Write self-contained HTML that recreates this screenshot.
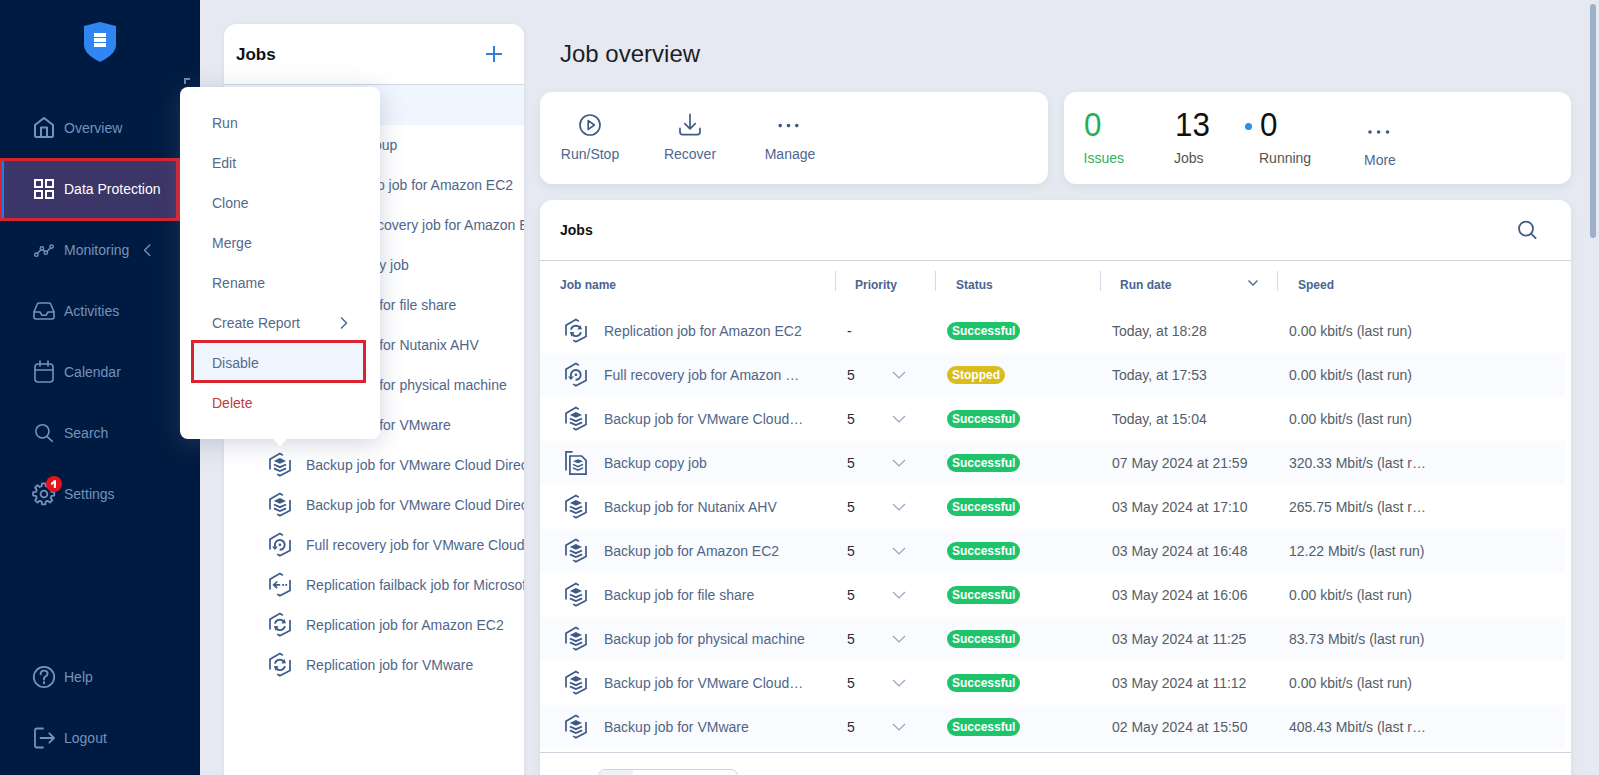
<!DOCTYPE html>
<html><head><meta charset="utf-8">
<style>
*{box-sizing:border-box;margin:0;padding:0}
html,body{width:1599px;height:775px;overflow:hidden}
body{font-family:"Liberation Sans",sans-serif;background:#e6e9f1;position:relative;color:#4d6283}
.abs{position:absolute}
#side{left:0;top:0;width:200px;height:775px;background:#001b41}
.nav{position:absolute;left:0;width:200px;height:40px;font-size:14px;color:#7592bb}
.nav .t{position:absolute;left:64px;top:0;line-height:40px;white-space:nowrap}
#jp{left:224px;top:24px;width:300px;height:760px;background:#fff;border-radius:12px 12px 0 0;box-shadow:0 1px 5px rgba(40,60,100,.07)}
.jrow{position:absolute;width:300px;height:40px;font-size:14px;color:#4f6689;white-space:nowrap;overflow:hidden}
.jrow .t{position:absolute;left:82px;top:0;line-height:40px}
.jrow svg{position:absolute}
.card{position:absolute;background:#fff;border-radius:12px;box-shadow:0 3px 8px rgba(40,60,100,.08)}
.lbl{position:absolute;text-align:center;font-size:14px;color:#4d6790;line-height:16px}
.big{position:absolute;top:17px;font-size:33px;line-height:32px;transform:scaleX(.95);transform-origin:0 0}
.sl{position:absolute;top:58px;font-size:14px;color:#555;line-height:16px}
.menu{position:absolute;left:180px;top:87px;width:200px;height:352px;background:#fff;border-radius:8px;box-shadow:0 4px 24px rgba(100,112,145,.3)}
.mi{position:absolute;left:32px;font-size:14px;color:#536a8b;line-height:20px}
.hdr{position:absolute;font-size:12px;font-weight:bold;color:#4a6491;line-height:16px}
.sep{position:absolute;width:1px;height:20px;background:#d5dbe5}
.trow{position:absolute;left:0;width:1025px;height:44px;font-size:14px;white-space:nowrap}
.trow.alt{background:#f9fbfe}
.trow .n{position:absolute;left:64px;line-height:44px;color:#4f6689}
.trow .p{position:absolute;left:307px;line-height:44px;color:#1f2a3a}
.trow .d{position:absolute;left:572px;line-height:44px;color:#555d69}
.trow .s{position:absolute;left:749px;line-height:44px;color:#555d69}
.trow svg{position:absolute}
.trow svg.chev{left:351px;top:17px}
.badge{position:absolute;left:407px;top:13px;height:18px;border-radius:9px;font-size:12px;font-weight:bold;color:#fff;line-height:18px;padding:0 5px;background:#1ec46a}
.badge.st{background:#d8bd1d}
</style></head><body>
<svg width="0" height="0" style="position:absolute">
 <defs>
  <g id="hex" fill="none" stroke="#3e5b87" stroke-width="1.7" stroke-linecap="butt" stroke-linejoin="miter">
   <path d="M6 20.4 V10.3 L15.9 4.6 L18.8 6.3 M26 11.1 V21.4 L15.9 26.8 L13.2 25.1"/>
  </g>
  <symbol id="i-rep" viewBox="0 0 32 32">
   <use href="#hex"/>
   <g fill="none" stroke="#3e5b87" stroke-width="1.9">
    <path d="M11 14.6 A5 5 0 0 1 19.6 12.4"/>
    <path d="M20.9 17.2 A5 5 0 0 1 12.4 19.5"/>
   </g>
   <path d="M17.3 14.6 L22 14.2 L20.4 9.9 Z M14.5 17.3 L9.9 17.1 L11.4 21.7 Z" fill="#3e5b87"/>
  </symbol>
  <symbol id="i-rec" viewBox="0 0 32 32">
   <use href="#hex"/>
   <path d="M15.6 20.8 A4.9 4.9 0 1 0 10.9 15.9 V17.8" fill="none" stroke="#3e5b87" stroke-width="1.9"/>
   <path d="M8 17.6 L13.9 17.6 L10.9 21 Z" fill="#3e5b87"/>
   <circle cx="15.9" cy="15.8" r="1.35" fill="#3e5b87"/>
  </symbol>
  <symbol id="i-bak" viewBox="0 0 32 32">
   <use href="#hex"/>
   <path d="M9.9 12 L15.9 9 L22 12 L15.9 14.8 Z" fill="#3e5b87"/>
   <path d="M9.9 15.5 L15.9 18.2 L22.1 15.5 M9.9 19.4 L15.9 22.1 L22.1 19.4" fill="none" stroke="#3e5b87" stroke-width="1.85"/>
  </symbol>
  <symbol id="i-copy" viewBox="0 0 32 32">
   <g fill="none" stroke="#3e5b87" stroke-width="1.7">
    <path d="M6 23.6 V4.8 H12.6"/>
    <path d="M9.9 27.1 V9 H21.7 L26 13.3 V27.1 Z"/>
    <path d="M13 17.4 L18 19.6 L23 17.4 M13 20.9 L18 23.1 L23 20.9" stroke-width="1.5"/>
   </g>
   <path d="M13 14.3 L18 12.2 L23 14.3 L18 16.3 Z" fill="#3e5b87"/>
  </symbol>
  <symbol id="i-fb" viewBox="0 0 32 32">
   <use href="#hex"/>
   <path d="M13.2 12.5 L9.7 15.9 L13.2 19.2 M9.7 15.9 H16.2" fill="none" stroke="#3e5b87" stroke-width="1.7"/>
   <rect x="18.2" y="15" width="1.8" height="1.8" fill="#3e5b87"/><rect x="21.3" y="15" width="1.8" height="1.8" fill="#3e5b87"/>
  </symbol>
 </defs>
</svg>
<div id="side" class="abs"></div>
<svg class="abs" style="left:0;top:0" width="200" height="775">
 <path d="M100 22 L116 26 V45 Q116 54 100 62 Q84 54 84 45 V26 Z" fill="#2f86f2"/>
 <rect x="94" y="33" width="12" height="4" fill="#fff"/><rect x="94" y="38" width="12" height="4" fill="#fff"/><rect x="94" y="43" width="12" height="4" fill="#fff"/>
 <path d="M185 84 V79 H190" stroke="#6d87ad" stroke-width="2" fill="none"/>
 <g fill="none" stroke="#7592bb" stroke-width="2" stroke-linejoin="round" stroke-linecap="round">
  <path d="M35 125 L44 118 L53 125 V135.5 Q53 137 51.5 137 H36.5 Q35 137 35 135.5 Z"/>
  <path d="M41 137 V127.5 H47 V137"/>
 </g>
 <rect x="0" y="158" width="180" height="63" fill="#d9232f"/>
 <rect x="2" y="161" width="174" height="57" fill="#3c3567"/>
 <rect x="2" y="161" width="2" height="57" fill="#1f7cf0"/>
 <g fill="none" stroke="#fff" stroke-width="2">
  <rect x="35" y="180" width="7" height="7"/><rect x="46" y="180" width="7" height="7"/>
  <rect x="35" y="191" width="7" height="7"/><rect x="46" y="191" width="7" height="7"/>
 </g>
 <g fill="none" stroke="#7592bb" stroke-width="1.6" stroke-linecap="round" stroke-linejoin="round">
  <g stroke-width="1.4"><circle cx="36.3" cy="254.7" r="1.7"/><circle cx="41.9" cy="248.5" r="1.7"/><circle cx="45.8" cy="252.7" r="1.7"/><circle cx="51.6" cy="246.6" r="1.7"/>
  <path d="M37.4 253.4 L40.8 249.8 M43.1 249.8 L44.6 251.4 M47 251.4 L50.4 247.9"/></g>
  <path d="M149.8 245 L144.6 250.2 L149.8 255.4" stroke-width="1.4"/>
  <path d="M34 312 L37.3 304 Q38 303 39.5 303 H48.5 Q50 303 50.7 304 L54 312 V317 Q54 319 52 319 H36 Q34 319 34 317 Z"/>
  <path d="M34 312 H40 L42 315.3 H46 L48 312 H54"/>
  <rect x="35" y="364" width="18" height="18" rx="3"/>
  <path d="M35 370 H53 M40 361 V366 M48 361 V366"/>
  <circle cx="42.4" cy="431.3" r="6.6"/>
  <path d="M47.2 436.6 L52.3 441.4"/>
  <circle cx="44" cy="677" r="10.2" stroke-width="1.8"/>
  <path d="M40.6 674.2 Q40.6 670.6 44 670.6 Q47.6 670.6 47.6 673.6 Q47.6 675.6 45.2 676.6 Q44 677.2 44 678.6 V679.6" stroke-width="1.9"/>
  <path d="M44 682.4 V683.2" stroke-width="2.2"/>
  <path d="M43 728.5 H37 Q35 728.5 35 730.5 V745.5 Q35 747.5 37 747.5 H43" stroke-width="1.8"/>
  <path d="M40.5 738 H54 M49.3 733.3 L54 738 L49.3 742.7" stroke-width="1.8"/>
 </g>
 <g fill="none" stroke="#7592bb" stroke-width="1.8" stroke-linejoin="round">
  <path d="M41.63 486.17 L42.03 483.33 L45.37 483.33 L45.77 486.17 L47.70 486.97 L49.99 485.24 L52.36 487.61 L50.63 489.90 L51.43 491.83 L54.27 492.23 L54.27 495.57 L51.43 495.97 L50.63 497.90 L52.36 500.19 L49.99 502.56 L47.70 500.83 L45.77 501.63 L45.37 504.47 L42.03 504.47 L41.63 501.63 L39.70 500.83 L37.41 502.56 L35.04 500.19 L36.77 497.90 L35.97 495.97 L33.13 495.57 L33.13 492.23 L35.97 491.83 L36.77 489.90 L35.04 487.61 L37.41 485.24 L39.70 486.97 Z"/>
  <circle cx="44" cy="494" r="3.4"/>
 </g>
 <circle cx="54" cy="484" r="8" fill="#e5141b"/>
 <path d="M53.7 480.2 H56 V488 H53.8 V483.4 Q52.7 484.4 51.1 484.9 V482.8 Q52.9 482 53.7 480.2 Z" fill="#fff"/>
 
</svg>
<div class="nav" style="top:108px"><span class="t">Overview</span></div>
<div class="nav" style="top:169px;color:#fff"><span class="t">Data Protection</span></div>
<div class="nav" style="top:230px"><span class="t">Monitoring</span></div>
<div class="nav" style="top:291px"><span class="t">Activities</span></div>
<div class="nav" style="top:352px"><span class="t">Calendar</span></div>
<div class="nav" style="top:413px"><span class="t">Search</span></div>
<div class="nav" style="top:474px"><span class="t">Settings</span></div>

<div class="nav" style="top:657px"><span class="t">Help</span></div>
<div class="nav" style="top:718px"><span class="t">Logout</span></div>
<div id="jp" class="abs">
 <div class="abs" style="left:12px;top:21px;font-size:17px;font-weight:bold;color:#111;line-height:20px">Jobs</div>
 <div class="abs" style="left:0;top:60px;width:300px;height:1px;background:#cfd6e0"></div>
 <div class="abs" style="left:0;top:61px;width:300px;height:40px;background:#f0f6fe"></div>
 <svg class="abs" style="left:254px;top:22px" width="32" height="16"><path d="M16 0 V16 M8 8 H24" stroke="#2f7fd9" stroke-width="2"/></svg>
</div>
<div class="jrow" style="left:224px;top:125px"><span class="t" style="left:87px">Backup group</span></div>
<div class="jrow" style="left:224px;top:165px"><span class="t" style="left:114px">Backup job for Amazon EC2</span></div>
<div class="jrow" style="left:224px;top:205px"><span class="t" style="left:114px">Full recovery job for Amazon EC2</span></div>
<div class="jrow" style="left:224px;top:245px"><span class="t">Backup copy job</span></div>
<div class="jrow" style="left:224px;top:285px"><span class="t">Backup job for file share</span></div>
<div class="jrow" style="left:224px;top:325px"><span class="t">Backup job for Nutanix AHV</span></div>
<div class="jrow" style="left:224px;top:365px"><span class="t">Backup job for physical machine</span></div>
<div class="jrow" style="left:224px;top:405px"><span class="t">Backup job for VMware</span></div>
<div class="jrow" style="left:224px;top:445px"><svg width="32" height="32" style="left:40px;top:4px"><use href="#i-bak"/></svg><span class="t">Backup job for VMware Cloud Director</span></div>
<div class="jrow" style="left:224px;top:485px"><svg width="32" height="32" style="left:40px;top:4px"><use href="#i-bak"/></svg><span class="t">Backup job for VMware Cloud Director 2</span></div>
<div class="jrow" style="left:224px;top:525px"><svg width="32" height="32" style="left:40px;top:4px"><use href="#i-rec"/></svg><span class="t">Full recovery job for VMware Cloud Director</span></div>
<div class="jrow" style="left:224px;top:565px"><svg width="32" height="32" style="left:40px;top:4px"><use href="#i-fb"/></svg><span class="t">Replication failback job for Microsoft Hyper-V</span></div>
<div class="jrow" style="left:224px;top:605px"><svg width="32" height="32" style="left:40px;top:4px"><use href="#i-rep"/></svg><span class="t">Replication job for Amazon EC2</span></div>
<div class="jrow" style="left:224px;top:645px"><svg width="32" height="32" style="left:40px;top:4px"><use href="#i-rep"/></svg><span class="t">Replication job for VMware</span></div>
<div class="abs" style="left:560px;top:39px;font-size:24px;color:#1c1f25;line-height:30px">Job overview</div>
<div class="card" style="left:540px;top:92px;width:508px;height:92px">
 <svg class="abs" style="left:0;top:0" width="508" height="92">
  <g fill="none" stroke="#3e5b87" stroke-width="1.7" stroke-linecap="round" stroke-linejoin="round">
   <circle cx="50" cy="33" r="10"/>
   <path d="M48.2 28.6 V37.4 L54.4 33 Z"/>
   <path d="M150 22.4 V36.6 M144.8 31.6 L150 36.8 L155.2 31.6"/>
   <path d="M140 36.4 V40 Q140 42.6 142.6 42.6 H157.4 Q160 42.6 160 40 V36.4"/>
  </g>
  <g fill="#3e5b87"><circle cx="240.2" cy="33.6" r="1.8"/><circle cx="248.5" cy="33.6" r="1.8"/><circle cx="256.8" cy="33.6" r="1.8"/></g>
 </svg>
 <div class="lbl" style="left:0;width:100px;top:54px">Run/Stop</div>
 <div class="lbl" style="left:100px;width:100px;top:54px">Recover</div>
 <div class="lbl" style="left:200px;width:100px;top:54px">Manage</div>
</div>
<div class="card" style="left:1064px;top:92px;width:507px;height:92px">
 <div class="big" style="left:20px;color:#1fb154">0</div>
 <div class="big" style="left:110.5px;color:#111">13</div>
 <div class="big" style="left:195.5px;color:#111">0</div>
 <div class="abs" style="left:181px;top:31px;width:7px;height:7px;border-radius:50%;background:#2a8fe8"></div>
 <div class="sl" style="left:19.5px;color:#2eb35c">Issues</div>
 <div class="sl" style="left:110px">Jobs</div>
 <div class="sl" style="left:195px">Running</div>
 <div class="sl" style="left:300px;top:59.5px;color:#4d6790">More</div>
 <svg class="abs" style="left:300px;top:37px" width="30" height="6"><g fill="#3e5b87"><circle cx="6" cy="3" r="1.8"/><circle cx="14.6" cy="3" r="1.8"/><circle cx="23.5" cy="3" r="1.8"/></g></svg>
</div>
<div class="abs" style="left:1590px;top:4px;width:6px;height:234px;border-radius:3px;background:#9db0ca"></div>
<div class="card" id="tc" style="left:540px;top:200px;width:1031px;height:600px;border-radius:12px 12px 0 0;overflow:hidden">
 <div class="abs" style="left:20px;top:22px;font-size:14px;font-weight:bold;color:#111;line-height:16px">Jobs</div>
 <svg class="abs" style="left:976px;top:18px" width="24" height="24"><circle cx="10" cy="10.6" r="7" fill="none" stroke="#3e5b87" stroke-width="1.8"/><path d="M15 15.6 L19.6 20.2" stroke="#3e5b87" stroke-width="1.8" stroke-linecap="round"/></svg>
 <div class="abs" style="left:0;top:60px;width:1031px;height:1px;background:#cdd5df"></div>
 <div class="hdr" style="left:20px;top:77px">Job name</div>
 <div class="hdr" style="left:315px;top:77px">Priority</div>
 <div class="hdr" style="left:416px;top:77px">Status</div>
 <div class="hdr" style="left:580px;top:77px">Run date</div>
 <div class="hdr" style="left:758px;top:77px">Speed</div>
 <div class="sep" style="left:295px;top:71px"></div>
 <div class="sep" style="left:395px;top:71px"></div>
 <div class="sep" style="left:560px;top:71px"></div>
 <div class="sep" style="left:737px;top:71px"></div>
 <svg class="abs" style="left:707px;top:79px" width="12" height="8"><path d="M1.5 1.5 L6 6 L10.5 1.5" fill="none" stroke="#4a6491" stroke-width="1.3"/></svg>
 <div class="trow" style="top:109px"><svg class="ic" width="32" height="32" style="left:20px;top:6px"><use href="#i-rep"/></svg><span class="n">Replication job for Amazon EC2</span><span class="p">-</span><span class="badge">Successful</span><span class="d">Today, at 18:28</span><span class="s">0.00 kbit/s (last run)</span></div>
 <div class="trow alt" style="top:153px"><svg class="ic" width="32" height="32" style="left:20px;top:6px"><use href="#i-rec"/></svg><span class="n">Full recovery job for Amazon …</span><span class="p">5</span><svg class="chev" width="16" height="10"><path d="M2 2 L8 8 L14 2" fill="none" stroke="#94a4ba" stroke-width="1.2"/></svg><span class="badge st">Stopped</span><span class="d">Today, at 17:53</span><span class="s">0.00 kbit/s (last run)</span></div>
 <div class="trow" style="top:197px"><svg class="ic" width="32" height="32" style="left:20px;top:6px"><use href="#i-bak"/></svg><span class="n">Backup job for VMware Cloud…</span><span class="p">5</span><svg class="chev" width="16" height="10"><path d="M2 2 L8 8 L14 2" fill="none" stroke="#94a4ba" stroke-width="1.2"/></svg><span class="badge">Successful</span><span class="d">Today, at 15:04</span><span class="s">0.00 kbit/s (last run)</span></div>
 <div class="trow alt" style="top:241px"><svg class="ic" width="32" height="32" style="left:20px;top:6px"><use href="#i-copy"/></svg><span class="n">Backup copy job</span><span class="p">5</span><svg class="chev" width="16" height="10"><path d="M2 2 L8 8 L14 2" fill="none" stroke="#94a4ba" stroke-width="1.2"/></svg><span class="badge">Successful</span><span class="d">07 May 2024 at 21:59</span><span class="s">320.33 Mbit/s (last r…</span></div>
 <div class="trow" style="top:285px"><svg class="ic" width="32" height="32" style="left:20px;top:6px"><use href="#i-bak"/></svg><span class="n">Backup job for Nutanix AHV</span><span class="p">5</span><svg class="chev" width="16" height="10"><path d="M2 2 L8 8 L14 2" fill="none" stroke="#94a4ba" stroke-width="1.2"/></svg><span class="badge">Successful</span><span class="d">03 May 2024 at 17:10</span><span class="s">265.75 Mbit/s (last r…</span></div>
 <div class="trow alt" style="top:329px"><svg class="ic" width="32" height="32" style="left:20px;top:6px"><use href="#i-bak"/></svg><span class="n">Backup job for Amazon EC2</span><span class="p">5</span><svg class="chev" width="16" height="10"><path d="M2 2 L8 8 L14 2" fill="none" stroke="#94a4ba" stroke-width="1.2"/></svg><span class="badge">Successful</span><span class="d">03 May 2024 at 16:48</span><span class="s">12.22 Mbit/s (last run)</span></div>
 <div class="trow" style="top:373px"><svg class="ic" width="32" height="32" style="left:20px;top:6px"><use href="#i-bak"/></svg><span class="n">Backup job for file share</span><span class="p">5</span><svg class="chev" width="16" height="10"><path d="M2 2 L8 8 L14 2" fill="none" stroke="#94a4ba" stroke-width="1.2"/></svg><span class="badge">Successful</span><span class="d">03 May 2024 at 16:06</span><span class="s">0.00 kbit/s (last run)</span></div>
 <div class="trow alt" style="top:417px"><svg class="ic" width="32" height="32" style="left:20px;top:6px"><use href="#i-bak"/></svg><span class="n">Backup job for physical machine</span><span class="p">5</span><svg class="chev" width="16" height="10"><path d="M2 2 L8 8 L14 2" fill="none" stroke="#94a4ba" stroke-width="1.2"/></svg><span class="badge">Successful</span><span class="d">03 May 2024 at 11:25</span><span class="s">83.73 Mbit/s (last run)</span></div>
 <div class="trow" style="top:461px"><svg class="ic" width="32" height="32" style="left:20px;top:6px"><use href="#i-bak"/></svg><span class="n">Backup job for VMware Cloud…</span><span class="p">5</span><svg class="chev" width="16" height="10"><path d="M2 2 L8 8 L14 2" fill="none" stroke="#94a4ba" stroke-width="1.2"/></svg><span class="badge">Successful</span><span class="d">03 May 2024 at 11:12</span><span class="s">0.00 kbit/s (last run)</span></div>
 <div class="trow alt" style="top:505px"><svg class="ic" width="32" height="32" style="left:20px;top:6px"><use href="#i-bak"/></svg><span class="n">Backup job for VMware</span><span class="p">5</span><svg class="chev" width="16" height="10"><path d="M2 2 L8 8 L14 2" fill="none" stroke="#94a4ba" stroke-width="1.2"/></svg><span class="badge">Successful</span><span class="d">02 May 2024 at 15:50</span><span class="s">408.43 Mbit/s (last r…</span></div>
 <div class="abs" style="left:0;top:552px;width:1031px;height:1px;background:#cdd5df"></div>
 <div class="abs" style="left:58px;top:569px;width:140px;height:30px;border:1px solid #c9d2de;border-radius:7px;overflow:hidden"><div class="abs" style="left:0;top:0;width:34px;height:30px;background:#eef1f6"></div></div>
</div><div class="menu">
 <div class="mi" style="top:26px">Run</div>
 <div class="mi" style="top:66px">Edit</div>
 <div class="mi" style="top:106px">Clone</div>
 <div class="mi" style="top:146px">Merge</div>
 <div class="mi" style="top:186px">Rename</div>
 <div class="mi" style="top:226px">Create Report</div>
 <svg class="abs" style="left:159px;top:229px" width="10" height="14"><path d="M2 1.5 L7.5 7 L2 12.5" fill="none" stroke="#4f6a8f" stroke-width="1.5"/></svg>
 <div class="abs" style="left:11px;top:253px;width:175px;height:43px;border:3px solid #d9232f;background:#eff6ff"></div>
 <div class="mi" style="top:266px">Disable</div>
 <div class="mi" style="top:306px;color:#c23b3b">Delete</div>
</div>
<svg class="abs" style="left:272px;top:438px" width="16" height="9"><path d="M0 0 L8 8 L16 0 Z" fill="#fff"/></svg>
</body></html>
